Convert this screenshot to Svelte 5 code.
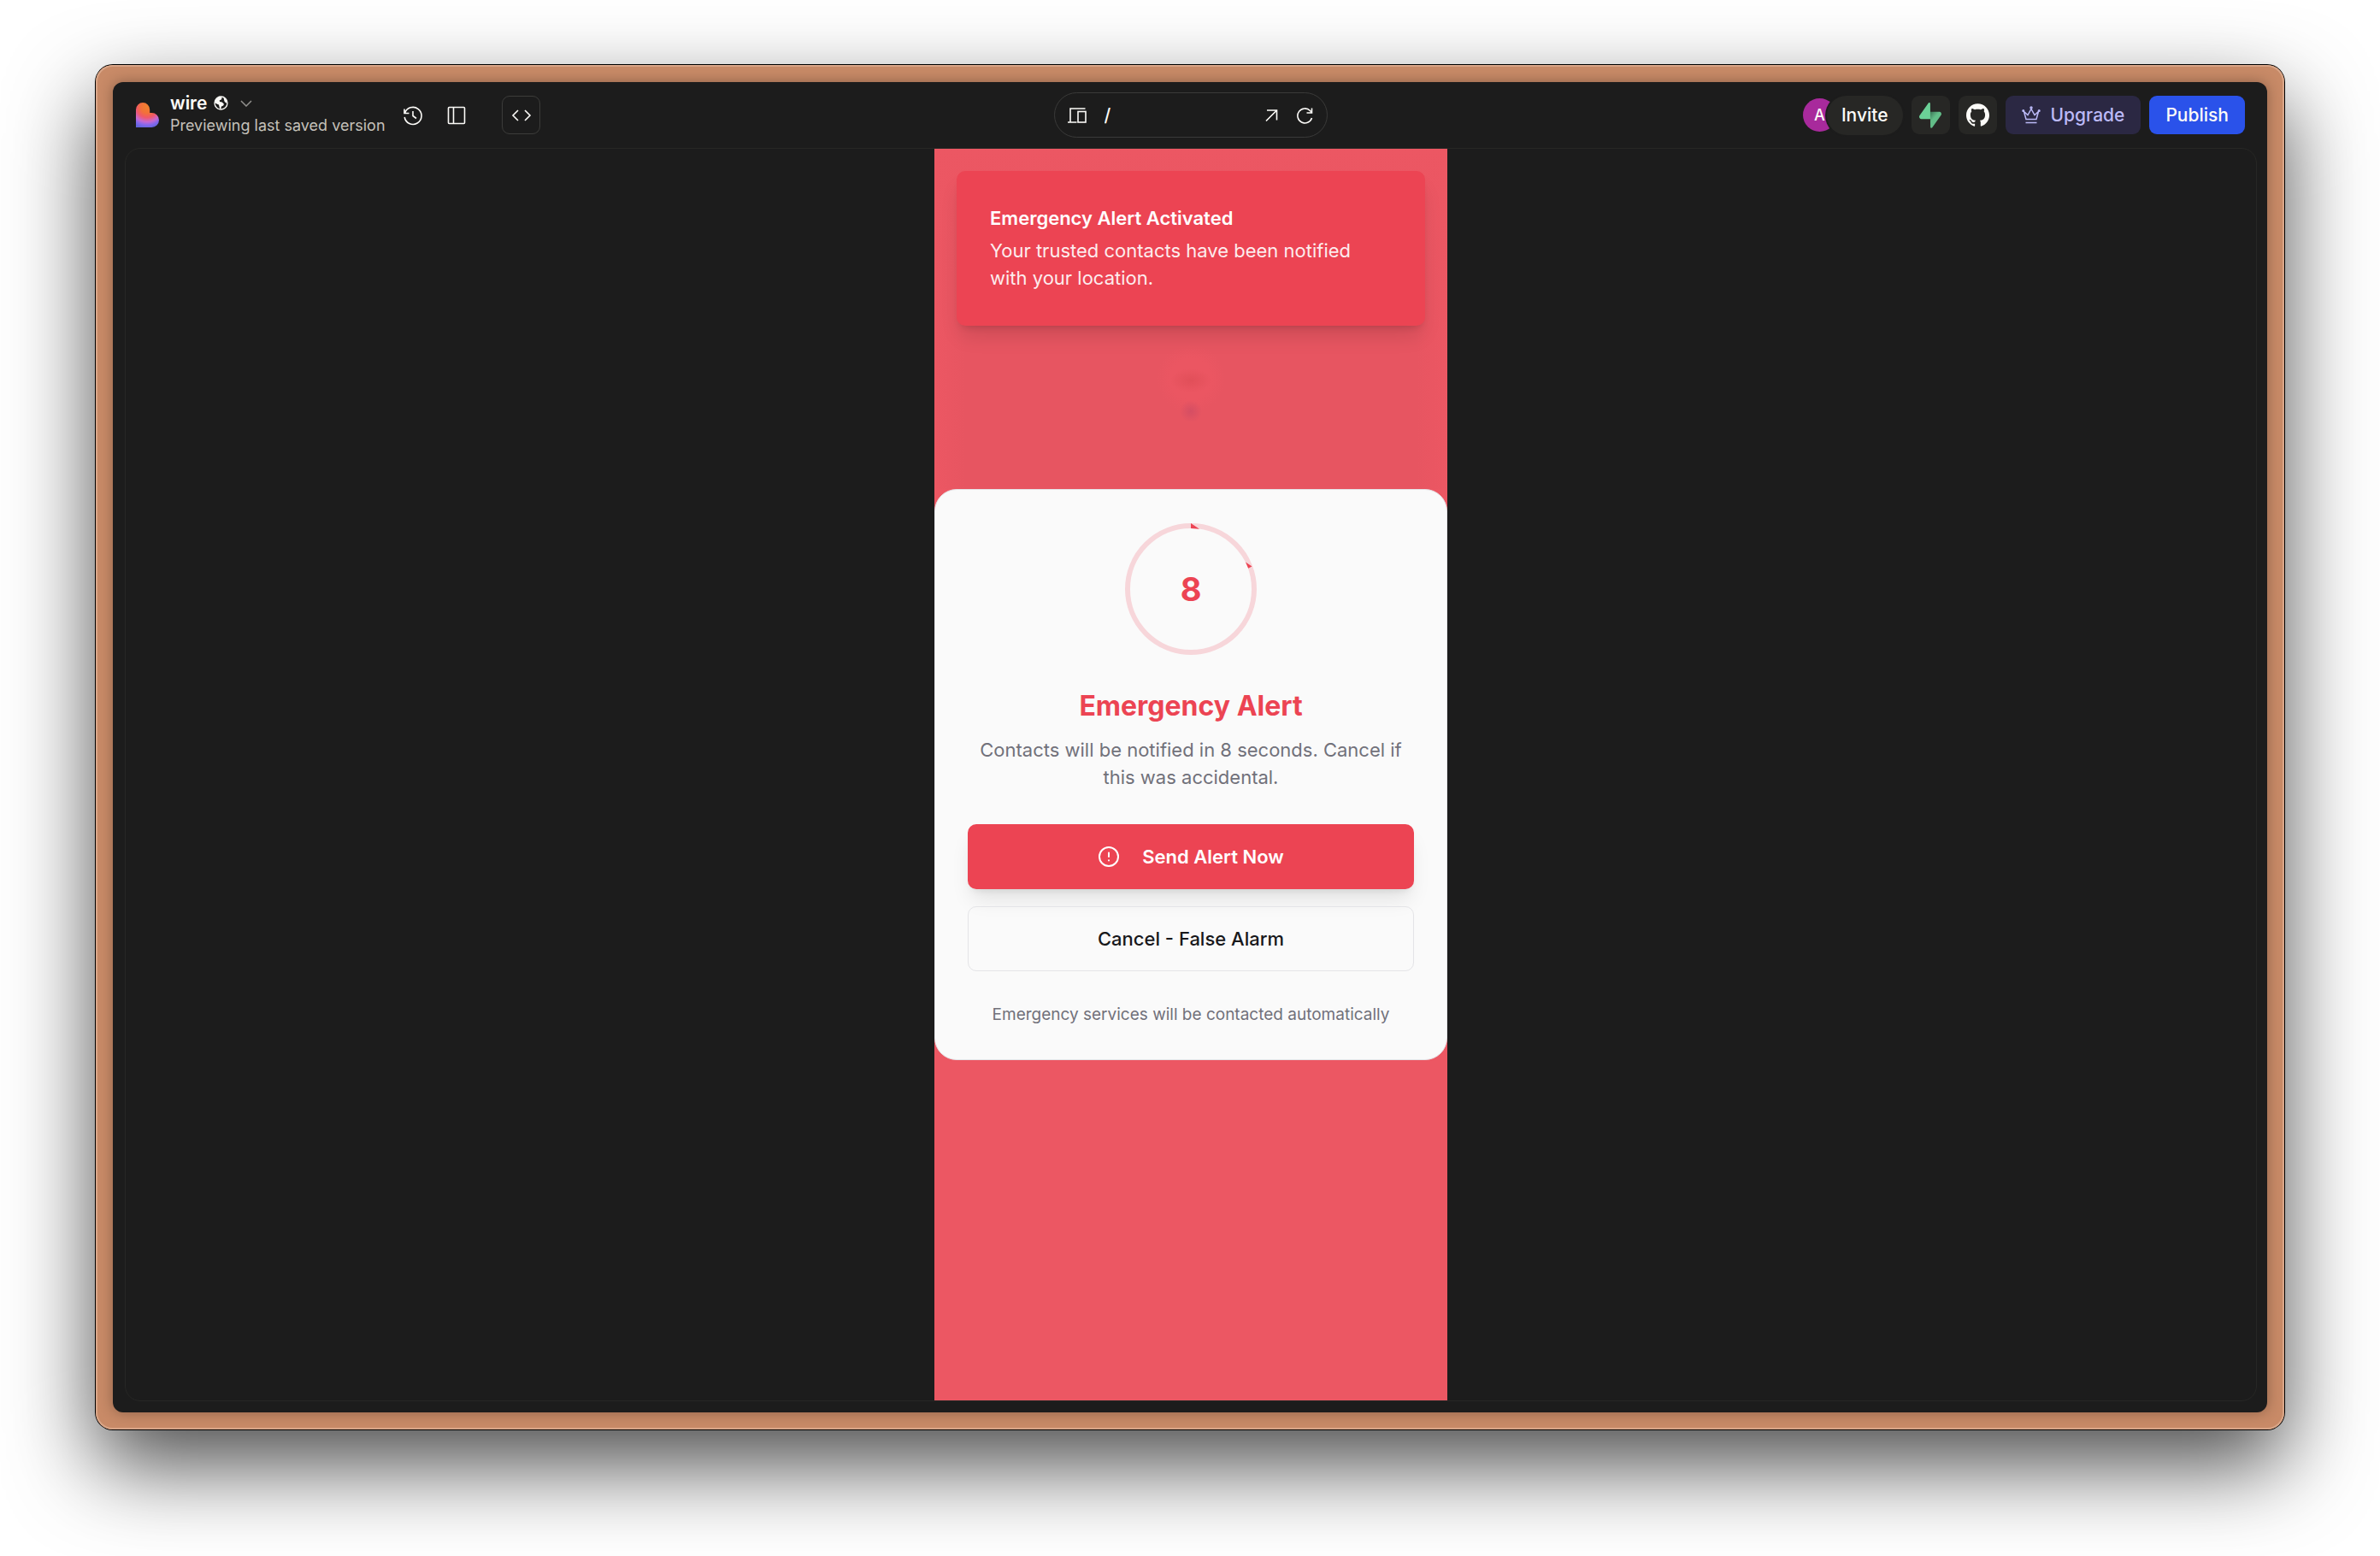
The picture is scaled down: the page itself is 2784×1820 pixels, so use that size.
<script>
  let path = $state('/');
  let seconds = $state(8);
</script>

<main class="desktop">
  <div class="frame">
    <div class="app">
      <header class="topbar">
        <div class="group">
          <svg class="logo" viewBox="0 0 27 29" aria-hidden="true">
            <defs>
              <radialGradient id="heart" gradientUnits="userSpaceOnUse" cx="13" cy="5" r="25">
                <stop offset="0" stop-color="#f0812e" />
                <stop offset="0.3" stop-color="#f2703a" />
                <stop offset="0.5" stop-color="#f0586a" />
                <stop offset="0.7" stop-color="#c868d0" />
                <stop offset="0.85" stop-color="#8468ec" />
                <stop offset="1" stop-color="#6264dc" />
              </radialGradient>
            </defs>
            <path fill="url(#heart)" d="M0 8.2a8.1 8.1 0 0 1 16.200 0V12h2.300a8.500 8.500 0 0 1 0 17H0Z" />
          </svg>
          <div class="project">
            <button class="name">
              <span>wire</span>
              <svg width="17" height="17" viewBox="0 0 17 17" aria-hidden="true">
                <circle cx="8.500" cy="8.500" r="7.500" fill="none" stroke="#fcfbf8" stroke-width="1.300" />
                <path fill="#fcfbf8" d="M1 8C1.500 4 4.500 1.200 8 1L9.800 2.800 8.500 4.800 6.800 5.200 7 7 9.800 7.500 12 9.800 11.200 11.500 9 12.500 8.200 15.800C6.800 15.500 6.500 12.500 6 10.500L3.500 9.500ZM11.500 2 14.500 4 15.800 8.500 14 8.300 12.500 6.500 12 4.500Z" />
              </svg>
              <svg class="chev" width="14" height="8" viewBox="0 0 14 8" aria-hidden="true">
                <path d="m1 1 6 6 6-6" fill="none" stroke="#91908d" stroke-width="1.500" />
              </svg>
            </button>
            <span class="status">Previewing last saved version</span>
          </div>
          <button class="plain" aria-label="History">
            <svg width="24" height="24" viewBox="0 0 24 24" class="line">
              <path d="M2.500 9.500A10 10 0 1 1 2.200 14M2 4.500v5h5.500M12 7v5.500l4 3" />
            </svg>
          </button>
          <button class="plain" aria-label="Toggle sidebar">
            <svg width="24" height="24" viewBox="0 0 24 24" class="line">
              <rect x="2.500" y="2.500" width="19" height="19" rx="1" /><path d="M8.500 2.500v19" />
            </svg>
          </button>
          <button class="code" aria-label="Code">
            <svg width="24" height="24" viewBox="0 0 24 24" class="line">
              <path d="m8 6-6 6 6 6M16 6l6 6-6 6" />
            </svg>
          </button>
        </div>

        <div class="address">
          <button class="plain" aria-label="Device size">
            <svg width="24" height="24" viewBox="0 0 24 24" class="line">
              <path d="M21.500 4H4v16M1 20h10.500" /><rect x="13" y="7.500" width="9" height="12.500" />
            </svg>
          </button>
          <input aria-label="Page path" bind:value={path} />
          <button class="plain" aria-label="Open in new tab">
            <svg width="24" height="24" viewBox="0 0 24 24" class="line">
              <path d="M6 18.500 18.500 6M7 6h11.500v11.500" />
            </svg>
          </button>
          <button class="plain" aria-label="Reload">
            <svg width="24" height="24" viewBox="0 0 24 24" class="line">
              <path d="M20.500 15A8.500 8.500 0 1 1 18.500 6.500L20.500 8.500M20.500 3.500v5.500h-6" />
            </svg>
          </button>
        </div>

        <div class="group actions">
          <div class="people">
            <span class="avatar">A</span>
            <button class="invite">Invite</button>
          </div>
          <button class="tile" aria-label="Supabase">
            <svg width="26" height="30" viewBox="0 0 109 113" preserveAspectRatio="none">
              <defs>
                <linearGradient id="bolt" x1="54" y1="45" x2="90" y2="80" gradientUnits="userSpaceOnUse">
                  <stop offset="0" stop-color="#3f7c5b" /><stop offset="0.600" stop-color="#62bd88" />
                </linearGradient>
              </defs>
              <path fill="url(#bolt)" d="M63.708 110.284c-2.860 3.601-8.658 1.628-8.727-2.970l-1.007-67.251h45.220c8.190 0 12.758 9.460 7.665 15.874z" />
              <path fill="#6bd197" d="M45.317 2.071c2.860-3.601 8.657-1.628 8.726 2.970l.442 67.251H9.831c-8.190 0-12.759-9.460-7.665-15.875z" />
            </svg>
          </button>
          <button class="tile" aria-label="GitHub">
            <svg width="27" height="27" viewBox="0 0 24 24">
              <path fill="#fcfbf8" d="M12 .297c-6.630 0-12 5.373-12 12 0 5.303 3.438 9.800 8.205 11.385.600.113.820-.258.820-.577 0-.285-.010-1.040-.015-2.040-3.338.724-4.042-1.610-4.042-1.610C4.422 18.070 3.633 17.700 3.633 17.700c-1.087-.744.084-.729.084-.729 1.205.084 1.838 1.236 1.838 1.236 1.070 1.835 2.809 1.305 3.495.998.108-.776.417-1.305.760-1.605-2.665-.300-5.466-1.332-5.466-5.930 0-1.310.465-2.380 1.235-3.220-.135-.303-.540-1.523.105-3.176 0 0 1.005-.322 3.300 1.230.960-.267 1.980-.399 3-.405 1.020.006 2.040.138 3 .405 2.280-1.552 3.285-1.230 3.285-1.230.645 1.653.240 2.873.120 3.176.765.840 1.230 1.910 1.230 3.220 0 4.610-2.805 5.625-5.475 5.920.420.360.810 1.096.810 2.220 0 1.606-.015 2.896-.015 3.286 0 .315.210.690.825.570C20.565 22.092 24 17.592 24 12.297c0-6.627-5.373-12-12-12" />
            </svg>
          </button>
          <button class="upgrade">
            <svg width="22" height="22" viewBox="0 0 22 22" aria-hidden="true">
              <g fill="none" stroke="#bcbaf8" stroke-width="1.500">
                <path d="M2.500 6.500 5 15.500h12l2.500-9-4.500 4-4-7-4 7ZM4.500 19.500h13" />
                <circle cx="11" cy="2" r="1" /><circle cx="1.800" cy="5.500" r="0.800" /><circle cx="20.200" cy="5.500" r="0.800" />
              </g>
            </svg>
            <span>Upgrade</span>
          </button>
          <button class="publish">Publish</button>
        </div>
      </header>

      <section class="preview">
        <div class="phone">
          <div class="backdrop">
            <div class="toast" role="status">
              <strong>Emergency Alert Activated</strong>
              <p>Your trusted contacts have been notified with your location.</p>
            </div>
          </div>

          <div class="dialog" role="dialog" aria-labelledby="dialog-title">
            <div class="timer">
              <svg width="154" height="154" viewBox="0 0 154 154" aria-hidden="true">
                <circle cx="77" cy="77" r="74" fill="none" stroke="#f7d6da" stroke-width="6" />
                <path fill="#ec4453" d="M77 0v6l10 .8ZM141 45.500l7.500 5-4.300 2.300Z" />
              </svg>
              <span>{seconds}</span>
            </div>
            <h1 id="dialog-title">Emergency Alert</h1>
            <p class="desc">Contacts will be notified in {seconds} seconds. Cancel if this was accidental.</p>
            <button class="send">
              <svg width="26" height="26" viewBox="0 0 26 26" aria-hidden="true">
                <g fill="none" stroke="#fff" stroke-width="2" stroke-linecap="round">
                  <circle cx="13" cy="13" r="11" /><path d="M13 8.500V13M13 17.300v.2" />
                </g>
              </svg>
              <span>Send Alert Now</span>
            </button>
            <button class="cancel">Cancel - False Alarm</button>
            <p class="note">Emergency services will be contacted automatically</p>
          </div>
        </div>
      </section>
    </div>
  </div>
</main>

<style>
  :global(body) {
    background: #fff;
  }

  * {
    box-sizing: border-box;
  }

  button,
  input {
    font: inherit;
    color: inherit;
    background: none;
    border: 0;
    padding: 0;
    margin: 0;
  }

  button {
    cursor: pointer;
  }

  svg {
    display: block;
    flex: none;
  }

  p,
  h1 {
    margin: 0;
  }

  .desktop {
    display: flex;
    min-height: 100vh;
    padding: 76px 112px 148px;
    font-family: Inter, 'Liberation Sans', sans-serif;
    overflow: hidden;
  }

  .frame {
    flex: 1;
    display: flex;
    min-width: 0;
    padding: 20px;
    border-radius: 20px;
    background: #c88a67;
    box-shadow:
      inset 0 0 0 2px #d9a587,
      0 0 0 1px #000,
      0 42px 100px rgba(0, 0, 0, 0.7);
  }

  .app {
    flex: 1;
    display: flex;
    flex-direction: column;
    min-width: 0;
    border-radius: 12px;
    background: #1c1c1c;
    color: #fcfbf8;
    box-shadow: 0 0 16px rgba(0, 0, 0, 0.3);
  }

  .topbar {
    display: grid;
    grid-template-columns: 1fr auto 1fr;
    align-items: center;
    height: 77px;
    padding: 0 26px 0 27px;
    font-size: 21px;
    font-weight: 500;
  }

  .group {
    display: flex;
    align-items: center;
  }

  .logo {
    width: 27px;
    height: 29px;
  }

  .project {
    display: flex;
    flex-direction: column;
    align-items: flex-start;
    width: 248px;
    margin: 0 24px 0 13px;
    padding-bottom: 2px;
    line-height: 26px;
    white-space: nowrap;
  }

  .name {
    display: flex;
    align-items: center;
    gap: 8px;
    font-weight: 600;
  }

  .chev {
    margin-left: 6px;
  }

  .status {
    font-size: 18px;
    font-weight: 400;
    color: #c5c1ba;
  }

  .line {
    fill: none;
    stroke: #fcfbf8;
    stroke-width: 1.6;
  }

  .group > .plain {
    margin-right: 27px;
  }

  .code {
    display: grid;
    place-items: center;
    width: 45px;
    height: 45px;
    margin-left: 14px;
    border: 1px solid #3c3c3a;
    border-radius: 9px;
  }

  .address {
    display: flex;
    align-items: center;
    gap: 15px;
    width: 320px;
    height: 53px;
    padding: 0 14px;
    border: 1px solid #3a3a39;
    border-radius: 27px;
  }

  .address input {
    flex: 1;
    min-width: 0;
    padding-left: 5px;
    outline: none;
  }

  .actions {
    justify-content: flex-end;
    gap: 10px;
  }

  .people {
    display: flex;
    align-items: center;
  }

  .avatar {
    width: 39px;
    height: 39px;
    border-radius: 50%;
    background: #a82a9c;
    font-size: 18px;
    line-height: 39px;
    text-align: center;
  }

  .invite {
    height: 46px;
    margin-left: -11px;
    padding: 0 17px;
    border-radius: 23px;
    background: #272725;
    box-shadow: 0 0 0 2px #1c1c1c;
  }

  .tile {
    display: grid;
    place-items: center;
    width: 45px;
    height: 45px;
    border-radius: 9px;
    background: #272725;
  }

  .upgrade,
  .publish {
    display: flex;
    align-items: center;
    gap: 12px;
    height: 45px;
    padding: 0 19px;
    border-radius: 9px;
  }

  .upgrade {
    background: #2b2843;
    color: #bcbaf8;
  }

  .publish {
    background: #2a52ea;
  }

  .preview {
    flex: 1;
    display: flex;
    justify-content: center;
    margin: 0 12px 13px 14px;
    border: 1px solid #272725;
    border-radius: 18px;
  }

  .phone {
    display: grid;
    grid-template-rows: 1fr auto 1fr;
    width: 600px;
    background: #ec5763;
  }

  .backdrop {
    padding: 26px;
    background:
      radial-gradient(circle at 300px 307px, rgba(205, 75, 100, 0.7), transparent 13px),
      radial-gradient(ellipse 24px 14px at 300px 271px, rgba(224, 78, 88, 0.9), transparent),
      radial-gradient(circle at 300px 269px, #eb5662 24px, transparent 40px),
      linear-gradient(90deg, #ec5763, transparent 36px calc(100% - 36px), #ec5763),
      linear-gradient(#ec5763, #e75561 150px);
  }

  .toast {
    padding: 39px 39px 40px;
    border-radius: 10px;
    background: #ec4453;
    color: #fff;
    font-size: 22px;
    line-height: 32px;
    box-shadow:
      0 16px 24px -5px rgba(0, 0, 0, 0.12),
      0 6px 10px -6px rgba(0, 0, 0, 0.18);
  }

  .toast strong {
    display: block;
    margin-bottom: 6px;
    font-weight: 600;
  }

  .toast p {
    opacity: 0.9;
  }

  .dialog {
    padding: 39px 38px;
    border: 1px solid #e4e4e7;
    border-radius: 26px;
    background: #fafafa;
    text-align: center;
    font-size: 22px;
    line-height: 32px;
    color: #71717a;
  }

  .timer {
    display: grid;
    place-items: center;
    margin-bottom: 39px;
  }

  .timer > :global(*) {
    grid-area: 1 / 1;
  }

  .timer span {
    font-size: 38px;
    font-weight: 700;
    color: #ec4453;
  }

  h1 {
    margin-bottom: 14px;
    font-size: 32px;
    line-height: 42px;
    font-weight: 700;
    color: #ec4453;
  }

  .desc {
    margin-bottom: 39px;
  }

  .send,
  .cancel {
    display: flex;
    align-items: center;
    justify-content: center;
    gap: 26px;
    width: 100%;
    height: 76px;
    border-radius: 10px;
    font-weight: 600;
  }

  .send {
    margin-bottom: 20px;
    background: #ec4453;
    color: #fff;
    box-shadow:
      0 16px 24px -5px rgba(0, 0, 0, 0.1),
      0 6px 10px -6px rgba(0, 0, 0, 0.12);
  }

  .cancel {
    margin-bottom: 38px;
    border: 1px solid #e4e4e7;
    color: #18181b;
    font-weight: 500;
  }

  .note {
    font-size: 19px;
    line-height: 26px;
  }
</style>
